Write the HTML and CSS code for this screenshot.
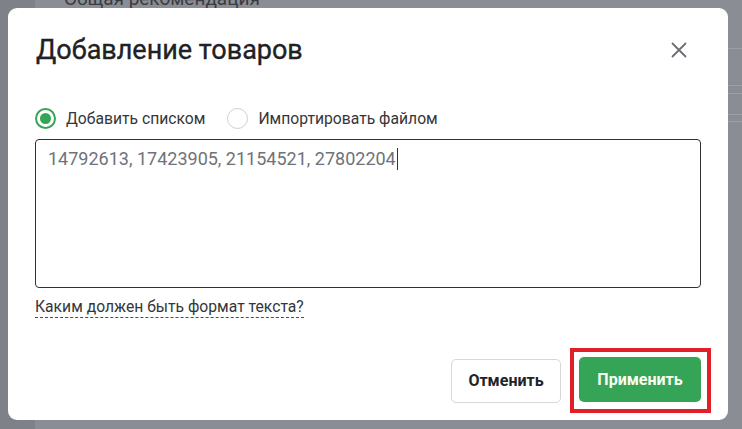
FILE: index.html
```html
<!DOCTYPE html>
<html lang="ru">

<head>
    <meta charset="UTF-8">
    <title>Добавление товаров</title>
    <link rel="stylesheet" href="styles.css">
</head>

<body>
    <div id="page">
        <aside id="page-sidebar"></aside>
        <main id="page-content">
            <h2 class="page-title">Общая рекомендация</h2>
            <div class="page-row page-row--first"></div>
            <div class="page-row page-row--a"></div>
            <div class="page-row page-row--b"></div>
            <div class="page-row page-row--c"></div>
            <div class="page-row page-row--d"></div>
        </main>
    </div>

    <div id="modal" role="dialog" aria-labelledby="modal-title">
        <header class="modal-header">
            <h1 id="modal-title" class="modal-title">Добавление товаров</h1>
            <button class="modal-close" aria-label="Закрыть">
                <svg width="16" height="16" viewBox="0 0 16 16">
                    <path d="M1.5 1.5 L14.5 14.5 M14.5 1.5 L1.5 14.5" stroke="#6b6e75" stroke-width="1.8"
                        stroke-linecap="round" fill="none" />
                </svg>
            </button>
        </header>

        <div class="modal-options">
            <label class="radio radio--checked">
                <span class="radio-circle"></span>
                <span class="radio-label">Добавить списком</span>
            </label>
            <label class="radio">
                <span class="radio-circle"></span>
                <span class="radio-label">Импортировать файлом</span>
            </label>
        </div>

        <div class="modal-input">14792613, 17423905, 21154521, 27802204<span class="caret"></span></div>

        <div class="modal-help">
            <a class="help-link" href="#">Каким должен быть формат текста?</a>
        </div>

        <footer class="modal-footer">
            <button class="btn btn--cancel">Отменить</button>
            <span class="highlight">
                <button class="btn btn--apply">Применить</button>
            </span>
        </footer>
    </div>
</body>

</html>
```

FILE: styles.css
```css
html,
body {
    margin: 0;
    padding: 0;
    height: 100%;
}

body {
    font-family: Roboto, 'Liberation Sans', Arial, sans-serif;
    background: #8a8d93;
    overflow: hidden;
    position: relative;
}

/* page behind the overlay */
#page {
    display: flex;
    height: 100%;
}

#page-sidebar {
    width: 35px;
    background: #7e8187;
}

#page-content {
    flex: 1;
    padding-left: 29px;
}

.page-title {
    margin: -12px 0 0 0;
    font-size: 19px;
    font-weight: 400;
    color: #3a3c41;
    line-height: 22px;
}

.page-row {
    border-bottom: 1px solid #9c9fa4;
}

.page-row--first {
    height: 38px;
}

.page-row--a {
    height: 36px;
}

.page-row--b {
    height: 7px;
}

.page-row--c {
    height: 20px;
}

.page-row--d {
    height: 6px;
}

/* modal */
#modal {
    position: absolute;
    left: 8px;
    top: 8px;
    width: 720px;
    height: 412px;
    box-sizing: border-box;
    padding: 26px 27px 7px 27px;
    background: #fff;
    border-radius: 9px;
    display: flex;
    flex-direction: column;
}

.modal-header {
    display: flex;
    align-items: center;
    justify-content: space-between;
}

.modal-title {
    margin: 0 0 0 1px;
    font-size: 27px;
    font-weight: 400;
    line-height: 32px;
    color: #202124;
    -webkit-text-stroke: 0.35px #202124;
}

.modal-close {
    border: 0;
    padding: 0;
    background: transparent;
    width: 16px;
    height: 16px;
    margin-right: 14px;
    display: flex;
}

.modal-options {
    display: flex;
    align-items: center;
    margin-top: 41px;
    height: 22px;
}

.radio {
    display: flex;
    align-items: center;
    margin-right: 22px;
}

.radio-circle {
    width: 21px;
    height: 21px;
    box-sizing: border-box;
    border-radius: 50%;
    border: 1.5px solid #cdcfd2;
    margin-right: 10px;
    display: flex;
    align-items: center;
    justify-content: center;
}

.radio--checked .radio-circle {
    border: 2px solid #35a456;
}

.radio--checked .radio-circle::after {
    content: '';
    width: 11px;
    height: 11px;
    border-radius: 50%;
    background: #35a456;
}

.radio-label {
    font-size: 15.7px;
    color: #34363a;
}

.modal-input {
    margin-top: 10px;
    height: 149px;
    box-sizing: border-box;
    border: 1.5px solid #2f3134;
    border-radius: 4px;
    padding: 7px 12px;
    font-size: 18px;
    line-height: 24px;
    color: #6f7277;
}

.caret {
    display: inline-block;
    width: 1px;
    height: 22px;
    background: #333;
    vertical-align: -5px;
    margin-left: 1px;
}

.modal-help {
    margin-top: 8px;
}

.help-link {
    font-size: 15.7px;
    line-height: 21px;
    color: #34363a;
    text-decoration: none;
    display: inline-block;
    border-bottom: 1.5px dashed #4a4c50;
}

.modal-footer {
    margin-top: auto;
    display: flex;
    justify-content: flex-end;
    align-items: center;
    gap: 9px;
    margin-right: -10px;
}

.btn {
    font-family: Roboto, 'Liberation Sans', Arial, sans-serif;
    font-size: 16px;
    font-weight: 700;
    border-radius: 5px;
    height: 44px;
    padding: 0;
}

.btn--cancel {
    width: 110px;
    background: #fff;
    border: 1px solid #d5d7da;
    color: #222326;
}

.highlight {
    display: flex;
    border: 4px solid #e11f27;
    padding: 5px 6px 7px 5px;
}

.btn--apply {
    width: 122px;
    height: 45px;
    background: #36a457;
    border: 0;
    color: #fbfdf0;
}
```
